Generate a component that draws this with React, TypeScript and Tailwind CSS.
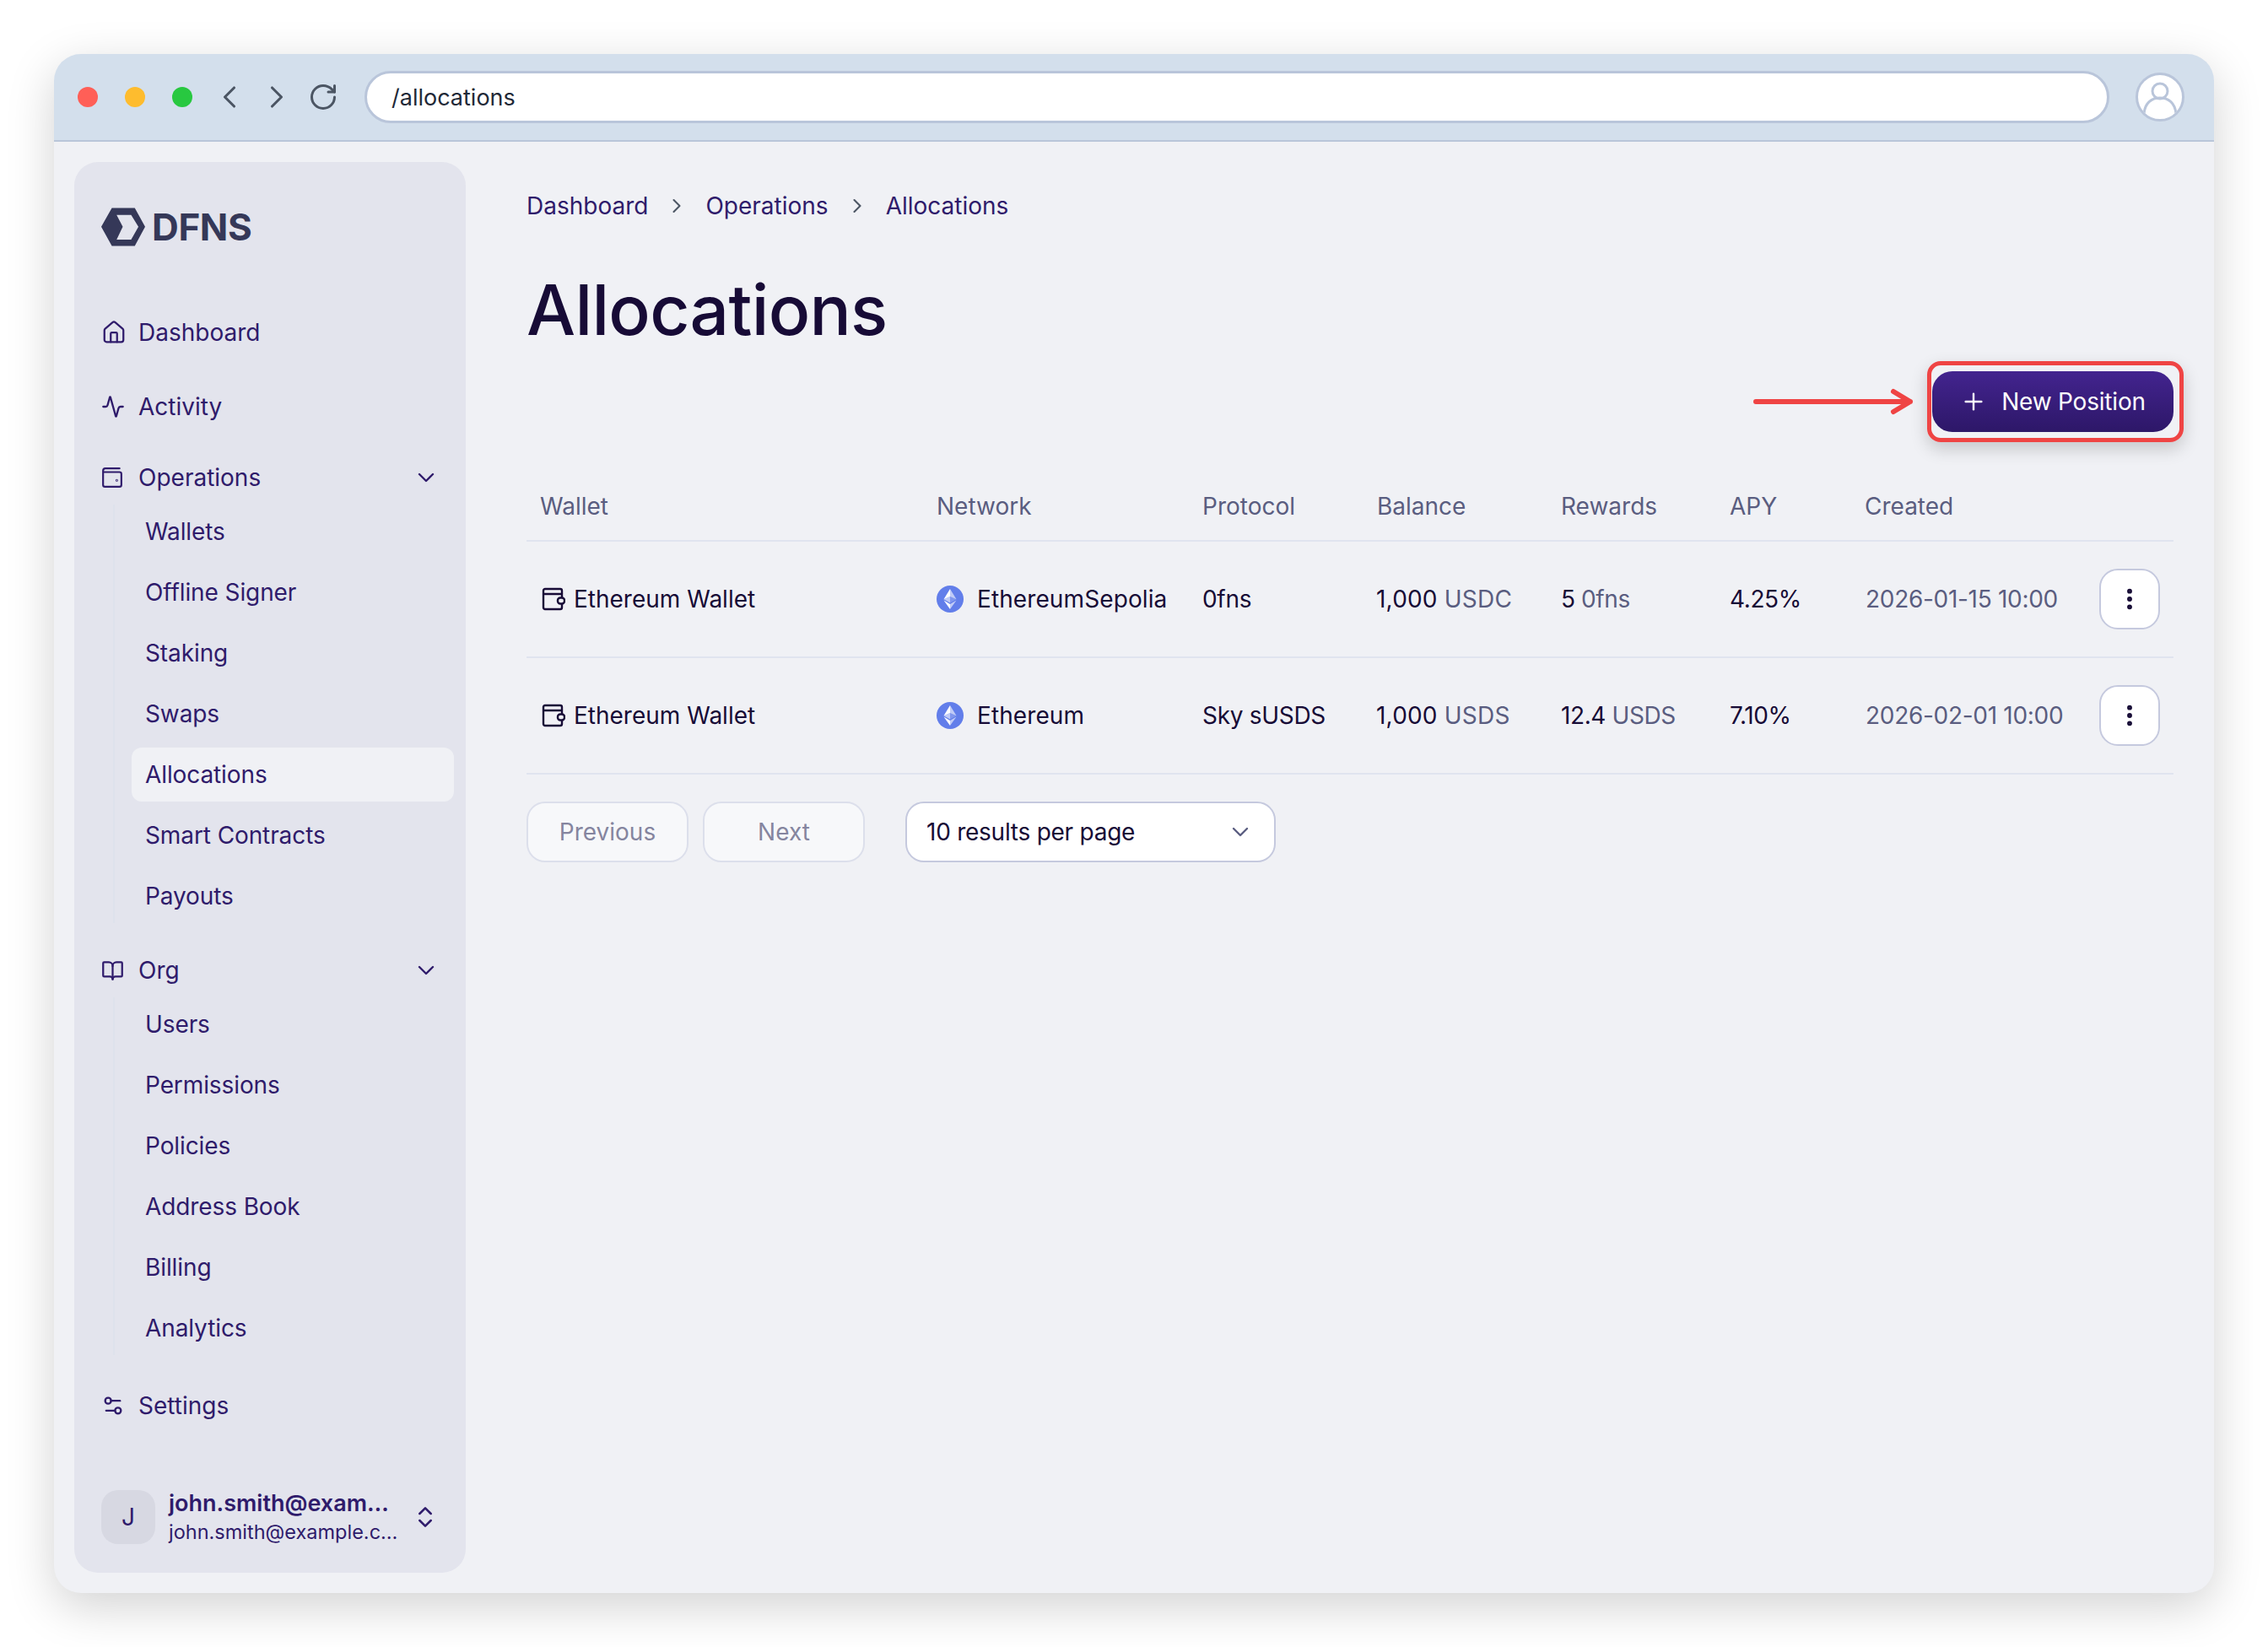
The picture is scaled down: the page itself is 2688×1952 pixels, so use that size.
import { Activity, BookOpen, ChevronDown, ChevronLeft, ChevronRight, ChevronsUpDown, EllipsisVertical, House, Plus, RotateCw, Settings2 } from 'lucide-react';

const opsItems = ['Wallets', 'Offline Signer', 'Staking', 'Swaps', 'Allocations', 'Smart Contracts', 'Payouts'];
const orgItems = ['Users', 'Permissions', 'Policies', 'Address Book', 'Billing', 'Analytics'];

const LogoMark = () => (
  <svg viewBox="30 30 157 136" className="w-[52px] h-[46px] shrink-0">
    <path fillRule="evenodd" fill="#353858" d="M30 97 68 30h82l37 67-37 69H68ZM85 55l22 42-22 46h52l26-46-26-42Z" />
  </svg>
);

const OpsIcon = () => (
  <svg viewBox="0 0 24 24" fill="none" stroke="currentColor" strokeWidth="2" strokeLinecap="round" strokeLinejoin="round" className="w-[26px] h-[26px]">
    <path d="M20 2H4.500A2.500 2.500 0 0 0 2 4.500V20a2 2 0 0 0 2 2h16a2 2 0 0 0 2-2V8a2 2 0 0 0-2-2H2" />
    <circle cx="17" cy="15" r="0.4" />
  </svg>
);

const WalletIcon = () => (
  <svg viewBox="0 0 28 28" fill="none" stroke="#170b36" strokeWidth="2.4" strokeLinejoin="round" className="w-7 h-7 shrink-0">
    <path d="M2 8V4a2 2 0 0 1 2-2h18a2 2 0 0 1 2 2v4" />
    <path d="M2 8h22v4.500M24 20v4a2 2 0 0 1-2 2H4a2 2 0 0 1-2-2V8" />
    <rect x="19" y="12.500" width="8" height="7" rx="3" />
  </svg>
);

const EthIcon = () => (
  <svg viewBox="0 0 32 32" className="w-8 h-8 shrink-0">
    <circle cx="16" cy="16" r="16" fill="#627eea" />
    <path fill="#fff" fillOpacity="0.6" d="M16 4v9l7.500 3.300Z" />
    <path fill="#fff" d="M16 4 8.500 16.300 16 13Z" />
    <path fill="#fff" fillOpacity="0.6" d="M16 22v6l7.500-10.400Z" />
    <path fill="#fff" d="M16 22 8.500 17.600 16 28Z" />
    <path fill="#fff" fillOpacity="0.2" d="m16 20.600 7.500-4.300L16 13Z" />
    <path fill="#fff" fillOpacity="0.6" d="m8.500 16.300 7.500 4.300V13Z" />
  </svg>
);

const NavRow = ({ icon, label, open }: { icon: React.ReactNode; label: string; open?: boolean }) => (
  <div className="flex items-center h-9 pl-[32px] pr-[31px] text-[#2f1b6b]">
    <span className="w-[44px] flex items-center">{icon}</span>
    <span>{label}</span>
    {open && <ChevronDown className="ml-auto w-8 h-8" strokeWidth={1.8} />}
  </div>
);

const SubList = ({ items }: { items: string[] }) => (
  <div className="ml-[46px] mt-[14px] pl-[20px] mr-[14px] border-l-2 border-[#dee2ec] flex flex-col gap-2">
    {items.map((item) => (
      <div key={item} className={'h-16 flex items-center pl-4 rounded-xl text-[#2f1b6b] tracking-[-0.1px] ' + (item === 'Allocations' ? 'bg-[#f0f1f5]' : '')}>
        {item}
      </div>
    ))}
  </div>
);

const rows = [
  { network: 'EthereumSepolia', protocol: '0fns', balance: 'USDC', rewardValue: '5', rewardUnit: '0fns', apy: '4.25%', created: '2026-01-15 10:00' },
  { network: 'Ethereum', protocol: 'Sky sUSDS', balance: 'USDS', rewardValue: '12.4', rewardUnit: 'USDS', apy: '7.10%', created: '2026-02-01 10:00' },
];

const Sidebar = () => (
  <aside className="w-[464px] shrink-0 m-6 rounded-[28px] bg-[#e3e4ed] flex flex-col text-[28px]">
    <div className="flex items-center gap-2 pl-8 pt-[54px]">
      <LogoMark />
      <span className="text-[#353858] text-[44px] leading-[46px] font-bold tracking-[-0.4px]">DFNS</span>
    </div>
    <div className="mt-[84px] flex flex-col">
      <NavRow icon={<House className="w-[30px] h-[30px]" strokeWidth={1.8} />} label="Dashboard" />
      <div className="mt-[52px]">
        <NavRow icon={<Activity className="w-[28px] h-[28px]" strokeWidth={2} />} label="Activity" />
      </div>
      <div className="mt-[48px]">
        <NavRow icon={<OpsIcon />} label="Operations" open />
      </div>
      <SubList items={opsItems} />
      <div className="mt-[38px]">
        <NavRow icon={<BookOpen className="w-[27px] h-[27px]" strokeWidth={2} />} label="Org" open />
      </div>
      <SubList items={orgItems} />
      <div className="mt-[42px]">
        <NavRow icon={<Settings2 className="w-[28px] h-[28px]" strokeWidth={2} />} label="Settings" />
      </div>
    </div>
    <div className="mt-auto mb-8 pl-8 pr-[32px] flex items-center text-[#2f1b6b]">
      <div className="w-16 h-16 rounded-[20px] bg-[#d7d8e2] flex items-center justify-center text-[28px]">J</div>
      <div className="ml-4 flex flex-col pt-[1px]">
        <span className="text-[27px] leading-[36px] font-semibold whitespace-nowrap">john.smith@exam…</span>
        <span className="text-[23.5px] leading-[32px] whitespace-nowrap">john.smith@example.c…</span>
      </div>
      <ChevronsUpDown className="ml-auto w-8 h-8" strokeWidth={1.9} />
    </div>
  </aside>
);

const BrowserBar = () => (
  <div className="h-[104px] shrink-0 bg-[#d3dfec] border-b-2 border-[#b9c6d9] flex items-center pl-[28px] pr-[35px] rounded-t-[32px]">
    <div className="flex items-center gap-8">
      <span className="w-6 h-6 rounded-full bg-[#ff5f57]" />
      <span className="w-6 h-6 rounded-full bg-[#febc2e]" />
      <span className="w-6 h-6 rounded-full bg-[#28c840]" />
    </div>
    <div className="ml-[22px] flex items-center text-[#4b5563]">
      <ChevronLeft className="w-[44px] h-[44px]" strokeWidth={1.7} />
      <ChevronRight className="ml-3 w-[44px] h-[44px]" strokeWidth={1.7} />
      <RotateCw className="ml-[15px] w-[36px] h-[36px]" strokeWidth={2} />
    </div>
    <div className="ml-[31px] flex-1 h-[62px] rounded-full bg-white border-[3px] border-[#b9c5da] flex items-center pl-[29px] pt-[3px] text-[27px] text-[#1f2937]">
      /allocations
    </div>
    <div className="ml-[31px] w-[58px] h-[58px] rounded-full bg-white border-[3px] border-[#b9c5da] overflow-hidden">
      <svg viewBox="0 0 52 52" fill="none" stroke="#b9c5da" strokeWidth="3" className="w-full h-full">
        <circle cx="26" cy="19" r="9" />
        <path d="M7 46c1-13 9-19 19-19s18 6 19 19" />
      </svg>
    </div>
  </div>
);

const Table = () => (
  <table className="table-fixed w-full mt-[47px] text-[28px] border-collapse">
    <colgroup>
      <col className="w-[470px]" />
      <col className="w-[315px]" />
      <col className="w-[207px]" />
      <col className="w-[218px]" />
      <col className="w-[200px]" />
      <col className="w-[160px]" />
      <col className="w-[279px]" />
      <col className="w-[103px]" />
    </colgroup>
    <thead>
      <tr className="h-[82px] border-b-2 border-[#e0e4ef] text-left text-[#5a5d80]">
        {['Wallet', 'Network', 'Protocol', 'Balance', 'Rewards', 'APY', 'Created', ''].map((h) => (
          <th key={h} className="pl-4 font-normal">{h}</th>
        ))}
      </tr>
    </thead>
    <tbody className="text-[#170b36]">
      {rows.map((row) => (
        <tr key={row.network} className="h-[138px] border-b-2 border-[#e0e4ef]">
          <td className="pl-4">
            <div className="flex items-center gap-[10px] pl-[2px]">
              <WalletIcon />
              <span>Ethereum Wallet</span>
            </div>
          </td>
          <td className="pl-4">
            <div className="flex items-center gap-4">
              <EthIcon />
              <span className="tracking-[0.1px]">{row.network}</span>
            </div>
          </td>
          <td className="pl-4 tracking-[-0.3px]">{row.protocol}</td>
          <td className="pl-[15px] tracking-[0.2px]">
            1,000 <span className="text-[#5a5d80]">{row.balance}</span>
          </td>
          <td className="pl-4 tracking-[-0.4px]">
            {row.rewardValue} <span className="text-[#5a5d80]">{row.rewardUnit}</span>
          </td>
          <td className="pl-4 tracking-[-0.4px]">{row.apy}</td>
          <td className="pl-[17px] text-[#5a5d80] tracking-[-0.3px] whitespace-nowrap">{row.created}</td>
          <td className="pl-[15px]">
            <button className="w-[72px] h-[72px] rounded-[22px] bg-white border-2 border-[#c5c9de] flex items-center justify-center">
              <EllipsisVertical className="w-8 h-8 text-[#170b36]" strokeWidth={2.4} />
            </button>
          </td>
        </tr>
      ))}
    </tbody>
  </table>
);

const Pager = () => (
  <div className="mt-[32px] flex items-center text-[28px]">
    <button className="w-[192px] h-[72px] rounded-[22px] bg-[#f7f8fa] border-2 border-[#dcdfeb] text-[#85859f]">Previous</button>
    <button className="ml-[17px] w-[192px] h-[72px] rounded-[22px] bg-[#f7f8fa] border-2 border-[#dcdfeb] text-[#85859f]">Next</button>
    <div className="ml-[48px] w-[439px] h-[72px] rounded-[22px] bg-white border-2 border-[#c5c9de] flex items-center pl-[23px] pr-[24px] text-[#170b36] tracking-[-0.25px]">
      10 results per page
      <ChevronDown className="ml-auto w-8 h-8 text-[#5a5d80]" strokeWidth={1.8} />
    </div>
  </div>
);

const App = () => {
  return (
    <div className="w-[2688px] h-[1952px] bg-white p-16 font-['Inter',sans-serif]">
      <div className="w-[2560px] h-[1824px] rounded-[32px] bg-[#f0f1f5] shadow-[0_16px_56px_rgba(0,0,0,0.18)] flex flex-col">
        <BrowserBar />
        <div className="flex flex-1 min-h-0">
          <Sidebar />
          <main className="flex-1 pl-[48px] pr-[48px] pt-[24px]">
            <nav className="flex items-center h-[34px] mt-[35px] text-[28px] text-[#2f1b6b]">
              <span>Dashboard</span>
              <ChevronRight className="mx-[20px] w-[28px] h-[28px] text-[#4b5563]" strokeWidth={1.8} />
              <span>Operations</span>
              <ChevronRight className="mx-[20px] w-[28px] h-[28px] text-[#4b5563]" strokeWidth={1.8} />
              <span>Allocations</span>
            </nav>
            <h1 className="mt-[59px] text-[82px] leading-[96px] font-[550] text-[#170b36] tracking-[-0.7px]">Allocations</h1>
            <div className="relative flex justify-end mt-[24px]">
              <button className="w-[286px] h-[72px] rounded-[24px] bg-gradient-to-b from-[#43248f] to-[#2d1768] text-white text-[28px] tracking-[-0.2px] flex items-center justify-center gap-[17px]">
                <Plus className="w-8 h-8" strokeWidth={1.8} />
                New Position
              </button>
              <div className="absolute -top-3 -bottom-3 -right-3 w-[304px] rounded-2xl border-[5px] border-[#ef4444] shadow-[0_8px_20px_rgba(0,0,0,0.18)]" />
              <svg viewBox="0 0 190 32" fill="none" stroke="#ef4444" strokeWidth="6" strokeLinecap="round" strokeLinejoin="round" className="absolute right-[308px] top-[20px] w-[190px] h-[32px]">
                <path d="M3 16h183M166 4l20 12-20 12" />
              </svg>
            </div>
            <Table />
            <Pager />
          </main>
        </div>
      </div>
    </div>
  );
};

export default App;
